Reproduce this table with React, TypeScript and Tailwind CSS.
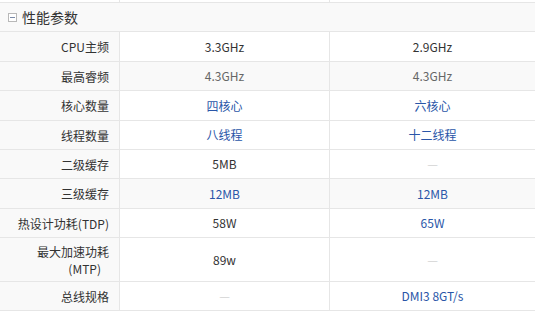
import { clsx } from "clsx";

type Cell = { text: string; tone?: "dark" | "gray" | "blue" | "dash" };
type Row = { label: string[]; a: Cell; b: Cell; h: string; shaded?: boolean };

const rows: Row[] = [
  { label: ["CPU主频"], a: { text: "3.3GHz" }, b: { text: "2.9GHz" }, h: "h-[30px]" },
  { label: ["最高睿频"], a: { text: "4.3GHz", tone: "gray" }, b: { text: "4.3GHz", tone: "gray" }, h: "h-[29px]", shaded: true },
  { label: ["核心数量"], a: { text: "四核心", tone: "blue" }, b: { text: "六核心", tone: "blue" }, h: "h-[30px]" },
  { label: ["线程数量"], a: { text: "八线程", tone: "blue" }, b: { text: "十二线程", tone: "blue" }, h: "h-[29px]" },
  { label: ["二级缓存"], a: { text: "5MB" }, b: { text: "—", tone: "dash" }, h: "h-[29px]" },
  { label: ["三级缓存"], a: { text: "12MB", tone: "blue" }, b: { text: "12MB", tone: "blue" }, h: "h-[30px]", shaded: true },
  { label: ["热设计功耗(TDP)"], a: { text: "58W" }, b: { text: "65W", tone: "blue" }, h: "h-[29px]" },
  { label: ["最大加速功耗", "(MTP)"], a: { text: "89w" }, b: { text: "—", tone: "dash" }, h: "h-[44px]" },
  { label: ["总线规格"], a: { text: "—", tone: "dash" }, b: { text: "DMI3 8GT/s", tone: "blue" }, h: "h-[29px]" },
];

function Value({ cell, last }: { cell: Cell; last?: boolean }) {
  return (
    <div
      className={clsx(
        "flex items-center justify-center",
        !last && "border-r border-[#e6e6e6]",
        cell.tone === "gray" && "text-[#666]",
        cell.tone === "blue" && "text-[#2a56a8]",
        cell.tone === "dash" && "text-[#d4d4d4]",
        (!cell.tone || cell.tone === "dark") && "text-[#333]"
      )}
    >
      {cell.text}
    </div>
  );
}

export default function App() {
  return (
    <div
      className="w-[535px] h-[312px] bg-white text-[12px] overflow-hidden"
      style={{ fontFamily: '"Noto Sans CJK SC", "Noto Sans", sans-serif' }}
    >
      <div className="grid h-[3px] grid-cols-[120px_210px_1fr] border-b border-[#e6e6e6]">
        <div className="border-r border-[#e6e6e6]" />
        <div className="border-r border-[#e6e6e6]" />
        <div />
      </div>
      <div className="flex h-[29px] items-center gap-[5px] border-b border-[#e6e6e6] bg-[#f9f9f9] pl-[8px]">
        <span className="flex h-[9px] w-[9px] items-center justify-center border border-[#b8b8b8] bg-white">
          <span className="h-px w-[5px] bg-[#7a8aa8]" />
        </span>
        <span className="text-[14px] text-[#333]">性能参数</span>
      </div>
      {rows.map((r) => (
        <div
          key={r.label.join("")}
          className={clsx(
            "grid grid-cols-[120px_210px_1fr] border-b border-[#e6e6e6]",
            r.h,
            r.shaded && "bg-[#f9f9f9]"
          )}
        >
          <div className="flex flex-col items-end justify-center border-r border-[#e6e6e6] bg-[#f9f9f9] pr-[10px] leading-[17px] text-[#333]">
            {r.label.map((l, i) => (
              <span key={l} className={clsx(i > 0 && "pr-[8px]")}>
                {l}
              </span>
            ))}
          </div>
          <Value cell={r.a} />
          <Value cell={r.b} last />
        </div>
      ))}
    </div>
  );
}
